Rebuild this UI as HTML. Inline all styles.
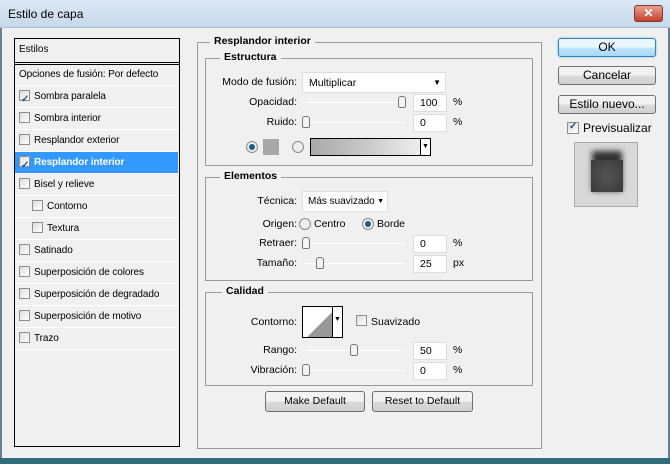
<!DOCTYPE html>
<html><head><meta charset="utf-8"><style>
*{box-sizing:border-box;margin:0;padding:0}
body{width:670px;height:464px;overflow:hidden;background:#f0f0f0;font:10.5px "Liberation Sans",sans-serif;color:#000;position:relative}
.a{position:absolute}
.title{left:0;top:0;width:670px;height:28px;background:linear-gradient(#dce8f4,#c6d8ea);border-bottom:1px solid #a9bdd2}
.frame{border:1px solid #9b9b9b}
.leg{background:#f0f0f0;padding:0 4px;font-weight:bold}
.row{left:15px;width:163px;height:22px;border-bottom:1px solid #fff;line-height:21px;white-space:nowrap;font-size:10px;letter-spacing:-0.1px}
.cb{display:inline-block;width:11px;height:11px;border:1px solid #8f8f8f;background:linear-gradient(135deg,#ddd,#fff);vertical-align:-2px;margin:0 4px 0 4px;position:relative}
.cba{position:absolute;width:11px;height:11px;border:1px solid #8f8f8f;background:linear-gradient(135deg,#ddd,#fff)}
.ck::after{content:"✓";position:absolute;left:1px;top:-2px;font-size:10px;color:#2a4a8a;font-weight:bold}
.inp{background:#fff;border:1px solid #ddd;padding-left:6px;line-height:17px;height:18px}
.trk{height:1px;background:#999;border-bottom:1px solid #fff}
.th{width:8px;height:12px;border:1px solid #777;border-radius:3px 3px 2px 2px;background:#f4f4f4}
.btn{border:1px solid #707070;border-radius:3px;background:linear-gradient(#f2f2f2 50%,#dcdcdc 50%,#cfcfcf);text-align:center}
.rad{width:12px;height:12px;border-radius:50%;border:1px solid #8a8a8a;background:#eee}
.rad.on::after{content:"";position:absolute;left:2px;top:2px;width:6px;height:6px;border-radius:50%;background:#1e5a8a}
.r{text-align:right}
</style></head><body>
<div class="a title"></div>
<div class="a" style="left:8px;top:7px;font-size:12px">Estilo de capa</div>
<div class="a" style="left:634px;top:5px;width:29px;height:17px;border-radius:3px;background:linear-gradient(#e8a090,#c4402c);border:1px solid #7a3a30;color:#fff;font-weight:bold;text-align:center;line-height:15px;font-size:12px">✕</div>
<div class="a" style="left:0;top:458px;width:670px;height:6px;background:#2f6d7a"></div>
<div class="a" style="left:0;top:28px;width:2px;height:430px;background:#6a8090"></div>
<div class="a" style="left:668px;top:28px;width:2px;height:430px;background:#6a8090"></div>

<div class="a" style="left:14px;top:38px;width:166px;height:409px;border:1px solid #000;background:#f0f0f0"></div>
<div class="a" style="left:15px;top:39px;width:164px;line-height:22px;padding-left:4px;border-bottom:3px double #000;height:26px;font-size:10px">Estilos</div>
<div class="a row" style="top:64px;padding-left:4px">Opciones de fusión: Por defecto</div>
<div class="a row" style="top:86px"><span class="cb ck"></span>Sombra paralela</div>
<div class="a row" style="top:108px"><span class="cb"></span>Sombra interior</div>
<div class="a row" style="top:130px"><span class="cb"></span>Resplandor exterior</div>
<div class="a row" style="top:152px;background:#3399ff;color:#fff;font-weight:bold"><span class="cb ck"></span>Resplandor interior</div>
<div class="a row" style="top:174px"><span class="cb"></span>Bisel y relieve</div>
<div class="a row" style="top:196px;padding-left:13px"><span class="cb"></span>Contorno</div>
<div class="a row" style="top:218px;padding-left:13px"><span class="cb"></span>Textura</div>
<div class="a row" style="top:240px"><span class="cb"></span>Satinado</div>
<div class="a row" style="top:262px"><span class="cb"></span>Superposición de colores</div>
<div class="a row" style="top:284px"><span class="cb"></span>Superposición de degradado</div>
<div class="a row" style="top:306px"><span class="cb"></span>Superposición de motivo</div>
<div class="a row" style="top:328px"><span class="cb"></span>Trazo</div>

<div class="a frame" style="left:197px;top:42px;width:345px;height:407px"></div>
<div class="a leg" style="left:210px;top:35px">Resplandor interior</div>
<div class="a frame" style="left:205px;top:58px;width:328px;height:108px"></div>
<div class="a leg" style="left:220px;top:51px">Estructura</div>
<div class="a r" style="left:200px;top:76px;width:97px">Modo de fusión:</div>
<div class="a inp" style="left:302px;top:72px;width:144px;height:21px;line-height:20px">Multiplicar<span style="position:absolute;right:4px;font-size:8px">▼</span></div>
<div class="a r" style="left:200px;top:96px;width:97px">Opacidad:</div>
<div class="a trk" style="left:305px;top:102px;width:100px"></div>
<div class="a th" style="left:398px;top:96px"></div>
<div class="a inp" style="left:413px;top:94px;width:34px">100</div><div class="a" style="left:453px;top:96px">%</div>
<div class="a r" style="left:200px;top:116px;width:97px">Ruido:</div>
<div class="a trk" style="left:305px;top:122px;width:100px"></div>
<div class="a th" style="left:302px;top:116px"></div>
<div class="a inp" style="left:413px;top:114px;width:34px">0</div><div class="a" style="left:453px;top:116px">%</div>
<div class="a rad on" style="left:246px;top:141px"></div>
<div class="a" style="left:263px;top:139px;width:16px;height:16px;background:#a8a8a8"></div>
<div class="a rad" style="left:292px;top:141px"></div>
<div class="a" style="left:310px;top:138px;width:121px;height:18px;border:1px solid #000;background:linear-gradient(90deg,#a8a8a8,#ccc 50%,#f4f4f4)"><span style="position:absolute;right:0;top:0;width:10px;height:16px;background:#fff;border-left:1px solid #000;font-size:7px;text-align:center;line-height:16px">▼</span></div>

<div class="a frame" style="left:205px;top:177px;width:328px;height:104px"></div>
<div class="a leg" style="left:220px;top:170px">Elementos</div>
<div class="a r" style="left:200px;top:195px;width:97px">Técnica:</div>
<div class="a inp" style="left:302px;top:191px;width:86px;height:21px;line-height:20px;padding-left:5px;font-size:10px">Más suavizado<span style="position:absolute;right:3px;font-size:7px">▼</span></div>
<div class="a r" style="left:200px;top:218px;width:97px">Origen:</div>
<div class="a rad" style="left:299px;top:218px"></div><div class="a" style="left:314px;top:218px">Centro</div>
<div class="a rad on" style="left:362px;top:218px"></div><div class="a" style="left:377px;top:218px">Borde</div>
<div class="a r" style="left:200px;top:237px;width:97px">Retraer:</div>
<div class="a trk" style="left:305px;top:243px;width:100px"></div>
<div class="a th" style="left:302px;top:237px"></div>
<div class="a inp" style="left:413px;top:235px;width:34px">0</div><div class="a" style="left:453px;top:237px">%</div>
<div class="a r" style="left:200px;top:257px;width:97px">Tamaño:</div>
<div class="a trk" style="left:305px;top:263px;width:100px"></div>
<div class="a th" style="left:316px;top:257px"></div>
<div class="a inp" style="left:413px;top:255px;width:34px">25</div><div class="a" style="left:453px;top:257px">px</div>

<div class="a frame" style="left:205px;top:292px;width:328px;height:94px"></div>
<div class="a leg" style="left:222px;top:285px">Calidad</div>
<div class="a r" style="left:200px;top:316px;width:97px">Contorno:</div>
<div class="a" style="left:302px;top:306px;width:41px;height:32px;border:1px solid #000;background:linear-gradient(135deg,#fff 50%,#999 50%)"><span style="position:absolute;right:0;top:0;width:10px;height:30px;background:#fff;border-left:1px solid #000;font-size:7px;text-align:center;line-height:26px">▼</span></div>
<div class="cba" style="left:356px;top:315px"></div><div class="a" style="left:371px;top:316px">Suavizado</div>
<div class="a r" style="left:200px;top:344px;width:97px">Rango:</div>
<div class="a trk" style="left:305px;top:350px;width:100px"></div>
<div class="a th" style="left:350px;top:344px"></div>
<div class="a inp" style="left:413px;top:342px;width:34px">50</div><div class="a" style="left:453px;top:344px">%</div>
<div class="a r" style="left:200px;top:364px;width:97px">Vibración:</div>
<div class="a trk" style="left:305px;top:370px;width:100px"></div>
<div class="a th" style="left:302px;top:364px"></div>
<div class="a inp" style="left:413px;top:362px;width:34px">0</div><div class="a" style="left:453px;top:364px">%</div>
<div class="a btn" style="left:265px;top:391px;width:100px;height:21px;line-height:19px">Make Default</div>
<div class="a btn" style="left:372px;top:391px;width:101px;height:21px;line-height:19px">Reset to Default</div>

<div class="a btn" style="left:558px;top:38px;width:98px;height:19px;line-height:17px;font-size:12px;border-color:#3c7fb1;background:linear-gradient(#eaf6fd 50%,#bee6fd 50%,#a7d9f5);box-shadow:0 0 2px #5fc0f0">OK</div>
<div class="a btn" style="left:558px;top:66px;width:98px;height:19px;line-height:17px;font-size:12px">Cancelar</div>
<div class="a btn" style="left:558px;top:95px;width:98px;height:19px;line-height:17px;font-size:12px">Estilo nuevo...</div>
<div class="cba ck" style="left:567px;top:122px;width:12px;height:12px"></div>
<div class="a" style="left:583px;top:121px;font-size:12px">Previsualizar</div>
<div class="a" style="left:574px;top:142px;width:64px;height:65px;background:#d8d8d8;border:1px solid #aaa">
<div class="a" style="left:17px;top:8px;width:30px;height:40px;background:#333;filter:blur(3px)"></div>
<div class="a" style="left:16px;top:17px;width:32px;height:32px;background:radial-gradient(#555,#3a3a3a)"></div>
</div>
</body></html>
